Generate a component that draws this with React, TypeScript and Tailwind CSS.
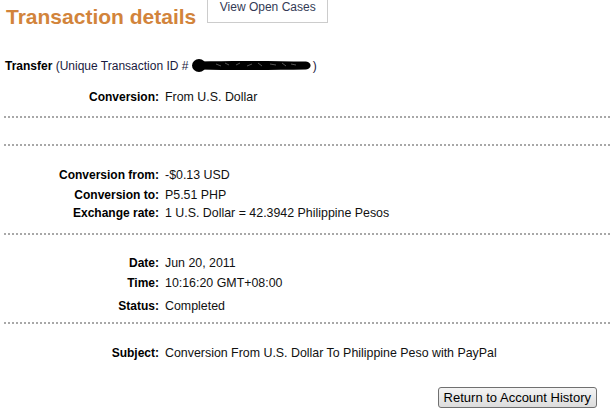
import React from "react";

const rows1 = [
  { label: "Conversion from:", value: "-$0.13 USD", mt: "mt-[0px]" },
  { label: "Conversion to:", value: "P5.51 PHP", mt: "mt-[5px]" },
  { label: "Exchange rate:", value: "1 U.S. Dollar = 42.3942 Philippine Pesos", mt: "mt-[3px]" },
];

const rows2 = [
  { label: "Date:", value: "Jun 20, 2011", mt: "mt-[0px]" },
  { label: "Time:", value: "10:16:20 GMT+08:00", mt: "mt-[5px]" },
  { label: "Status:", value: "Completed", mt: "mt-[8px]" },
];

function Row({ label, value, className = "" }: { label: string; value: string; className?: string }) {
  return (
    <div className={`flex h-[15px] items-baseline leading-[15px] ${className}`}>
      <span className="w-[159px] shrink-0 text-right text-[12px] font-bold text-black">{label}</span>
      <span className="ml-[6px] text-[12.4px] text-[#111]">{value}</span>
    </div>
  );
}

function Dots({ className = "" }: { className?: string }) {
  return (
    <div
      className={`mx-[4px] h-[2px] bg-[repeating-linear-gradient(90deg,#a8a8a8_0_2px,transparent_2px_4px)] ${className}`}
    />
  );
}

function Scribble() {
  return (
    <svg width="121" height="13" viewBox="0 0 121 13" className="inline-block align-[-2px]">
      <ellipse cx="7" cy="6.5" rx="7" ry="6.5" fill="#000" />
      <path d="M8 2.5 C40 1.5 80 2 114 2.5 C120 3 120 10 114 10.5 C80 11 40 11.5 8 10.5 Z" fill="#000" />
      <path
        d="M24 5 L29 7 M33 4 L37 6 M44 6 L48 4 M55 7 L60 5 M66 4 L70 7 M78 5 L84 6 M90 4 L94 7 M99 5 L104 6"
        stroke="#555"
        strokeWidth="1"
      />
    </svg>
  );
}

export default function App() {
  return (
    <div className="w-[615px] h-[416px] overflow-hidden bg-white font-['Liberation_Sans',Arial,sans-serif] text-[12px]">
      <div className="flex items-start">
        <h1 className="ml-[6px] mt-[4px] text-[21px] leading-[26px] font-bold text-[#d2843b]">
          Transaction details
        </h1>
        <div className="ml-[11px] h-[23px] w-[121px] border-x border-b border-[#cccccc] bg-white text-center text-[12px] leading-[14px] text-[#333a55]">
          View Open Cases
        </div>
      </div>

      <div className="ml-[5px] mt-[29px] h-[15px] leading-[15px] text-[#1a1a40]">
        <span className="font-bold text-black">Transfer</span> (Unique Transaction ID # <Scribble />)
      </div>

      <Row label="Conversion:" value="From U.S. Dollar" className="mt-[16px]" />

      <Dots className="mt-[11px]" />
      <Dots className="mt-[26px]" />

      <div className="mt-[22px]">
        {rows1.map((r) => (
          <Row key={r.label} label={r.label} value={r.value} className={r.mt} />
        ))}
      </div>

      <Dots className="mt-[12px]" />

      <div className="mt-[21px]">
        {rows2.map((r) => (
          <Row key={r.label} label={r.label} value={r.value} className={r.mt} />
        ))}
      </div>

      <Dots className="mt-[8px]" />

      <Row label="Subject:" value="Conversion From U.S. Dollar To Philippine Peso with PayPal" className="mt-[22px]" />

      <div className="mt-[26px] flex justify-end pr-[18px]">
        <button className="h-[21px] rounded-[3px] border border-[#707070] bg-[linear-gradient(#f4f4f4,#dcdcdc)] px-[5px] text-[13px] leading-[17px] text-black">
          Return to Account History
        </button>
      </div>
    </div>
  );
}
